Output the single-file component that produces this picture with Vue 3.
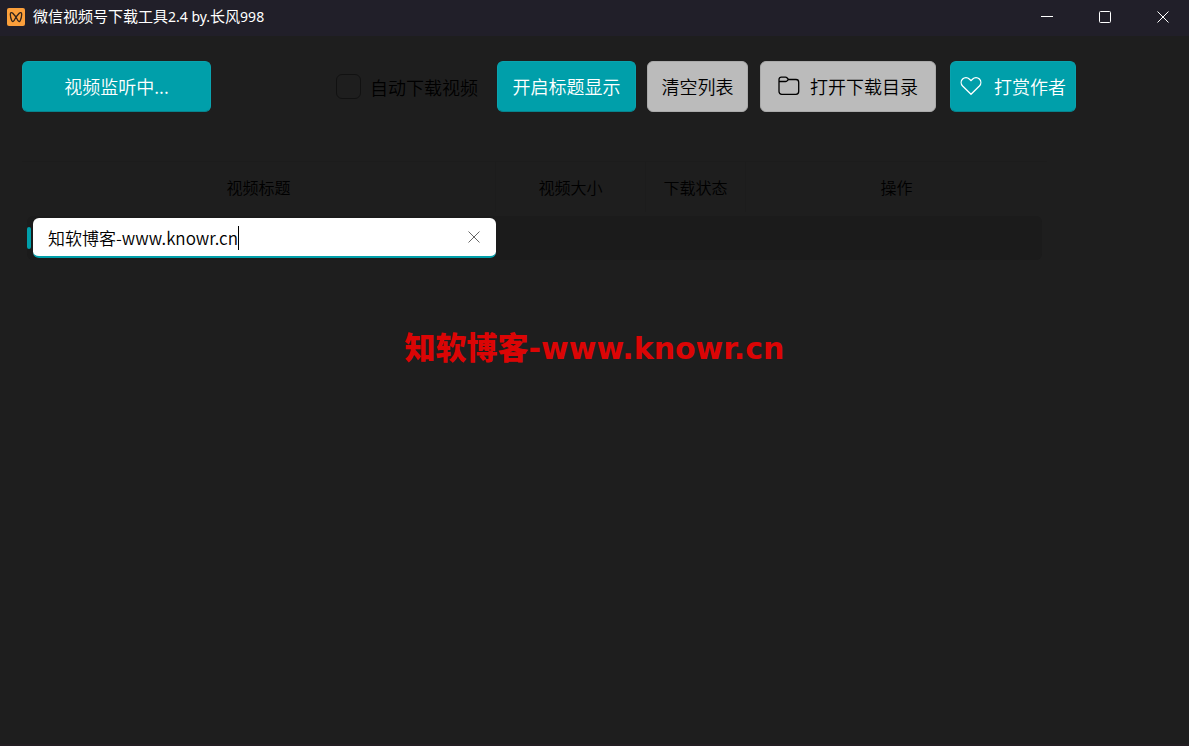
<script setup>
import { ref } from 'vue'

const autoDownload = ref(false)
const title = ref('知软博客-www.knowr.cn')
</script>

<template>
  <div class="window">
    <header class="titlebar">
      <svg class="logo" viewBox="0 0 18 18" aria-hidden="true">
        <rect width="18" height="18" rx="2" fill="#fb9f3b" />
        <path d="M9 9L5.800 5.300C4.600 4 3.300 4.400 3.300 6.300C3.300 8.500 4 11 4.800 12.700C5.300 13.800 6.300 13.700 7 12.700L9 9L11 12.700C11.700 13.700 12.700 13.800 13.200 12.700C14 11 14.700 8.500 14.700 6.300C14.700 4.400 13.400 4 12.200 5.300Z" fill="none" stroke="#33251c" stroke-width="1.300" stroke-linejoin="round" />
      </svg>
      <h1>微信视频号下载工具<span>2.4 by.</span>长风<span>998</span></h1>
      <div class="controls">
        <button type="button" aria-label="最小化">
          <svg viewBox="0 0 12 12"><path d="M0 5.500H12" /></svg>
        </button>
        <button type="button" aria-label="最大化">
          <svg viewBox="0 0 12 12"><rect x=".5" y=".5" width="11" height="11" rx="1" /></svg>
        </button>
        <button type="button" aria-label="关闭">
          <svg viewBox="0 0 12 12"><path d="M0.500 0.500L11.500 11.500M11.500 0.500L0.500 11.500" /></svg>
        </button>
      </div>
    </header>

    <main>
      <div class="toolbar">
        <button type="button" class="btn teal listen">视频监听中...</button>
        <label class="auto">
          <input v-model="autoDownload" type="checkbox" />
          <span>自动下载视频</span>
        </label>
        <button type="button" class="btn teal show">开启标题显示</button>
        <button type="button" class="btn grey clear">清空列表</button>
        <button type="button" class="btn grey folder">
          <svg width="22" height="20" viewBox="0 0 22 20" aria-hidden="true">
            <path d="M1 5.500V3.500C1 2 2 1.200 3.300 1.200H7.500C8.300 1.200 8.700 1.500 9.200 2L10.500 3.500H18C19.600 3.500 20.700 4.600 20.700 6.200V15.500C20.700 17.100 19.600 18.300 18 18.300H3.700C2.100 18.300 1 17.100 1 15.500V5.500H7.500C8.300 5.500 8.700 5.200 9.200 4.800L10.500 3.500" />
          </svg>
          打开下载目录
        </button>
        <button type="button" class="btn teal tip">
          <svg width="22" height="20" viewBox="0 0 22 20" aria-hidden="true">
            <path d="M11 18.300L2.600 10C0.700 8 0.700 4.900 2.600 3C4.500 1.100 7.500 1.100 9.300 3L11 4.700L12.700 3C14.500 1.100 17.500 1.100 19.400 3C21.300 4.900 21.300 8 19.400 10Z" />
          </svg>
          打赏作者
        </button>
      </div>

      <table>
        <colgroup>
          <col />
          <col class="size" />
          <col class="state" />
          <col class="action" />
        </colgroup>
        <thead>
          <tr>
            <th>视频标题</th>
            <th>视频大小</th>
            <th>下载状态</th>
            <th>操作</th>
          </tr>
        </thead>
        <tbody>
          <tr>
            <td>
              <div class="cell first">
                <i class="marker"></i>
                <div class="editor">
                  <input v-model="title" type="text" aria-label="视频标题" />
                  <div class="caret-track" aria-hidden="true"><span>{{ title }}</span><i></i></div>
                  <button type="button" aria-label="清除" @click="title = ''">
                    <svg width="12" height="12" viewBox="0 0 12 12"><path d="M0.500 0.500L11.500 11.500M11.500 0.500L0.500 11.500" /></svg>
                  </button>
                </div>
              </div>
            </td>
            <td><div class="cell"></div></td>
            <td><div class="cell"></div></td>
            <td><div class="cell last"></div></td>
          </tr>
        </tbody>
      </table>

      <p class="watermark">知软博客<span>-www.knowr.cn</span></p>
    </main>
  </div>
</template>

<style>
body {
  background: #1e1e1e;
}
</style>

<style scoped>
* {
  box-sizing: border-box;
}

.window {
  display: flex;
  flex-direction: column;
  min-height: 100vh;
  background: #1e1e1e;
  border-bottom: 2px solid #231e22;
  font-family: "Noto Sans CJK SC", sans-serif;
  font-weight: 350;
  color: #000;
}

button,
input {
  font: inherit;
  margin: 0;
}

.titlebar {
  display: flex;
  align-items: center;
  height: 36px;
  padding: 0 0 2px 7px;
  background: #211f29;
  color: #fff;
}

.logo {
  width: 18px;
  height: 18px;
  margin-right: 8px;
}

h1 {
  margin: 0;
  padding-bottom: 2px;
  font-size: 15px;
  line-height: 20px;
  font-weight: 400;
  white-space: nowrap;
}

h1 span {
  font-family: "Noto Sans", sans-serif;
  font-size: 14px;
}

.controls {
  display: flex;
  margin-left: auto;
  margin-right: -3px;
}

.controls button {
  display: flex;
  align-items: center;
  justify-content: center;
  width: 58px;
  height: 34px;
  padding: 0;
  border: 0;
  background: none;
}

.controls svg {
  width: 12px;
  height: 12px;
  fill: none;
  stroke: #fff;
}

main {
  padding: 25px 22px 0;
}

.toolbar {
  display: flex;
  align-items: center;
}

.btn {
  display: flex;
  align-items: center;
  justify-content: center;
  height: 51px;
  padding: 0 0 2px;
  border-radius: 6px;
  font-size: 18px;
  line-height: 24px;
  white-space: nowrap;
}

.btn svg {
  fill: none;
  stroke: currentColor;
  stroke-width: 1.3;
}

.teal {
  border: 1px solid #0aa3af;
  border-bottom-color: #07838d;
  background: #009faa;
  color: #fff;
}

.grey {
  border: 1px solid #aaa;
  background: #bbb;
}

.listen {
  width: 189px;
}

.auto {
  display: flex;
  align-items: center;
  gap: 9px;
  width: 161px;
  margin-left: 125px;
  font-size: 18px;
  line-height: 24px;
  white-space: nowrap;
}

.auto input {
  appearance: none;
  width: 25px;
  height: 25px;
  border: 1px solid #111;
  border-radius: 6px;
}

.show {
  width: 139px;
}

.clear {
  width: 101px;
  margin-left: 11px;
}

.folder {
  width: 176px;
  margin-left: 12px;
  gap: 10px;
}

.tip {
  width: 126px;
  margin-left: 14px;
  gap: 12px;
}

table {
  width: calc(100% - 120px);
  margin-top: 49px;
  border-collapse: separate;
  border-spacing: 0;
  table-layout: fixed;
}

.size {
  width: 150px;
}

.state {
  width: 100px;
}

.action {
  width: 301px;
}

th {
  height: 51px;
  padding: 0;
  border-top: 1px solid #1c1c1c;
  border-right: 1px solid #1c1c1c;
  font-size: 16px;
  line-height: 24px;
  font-weight: 350;
  text-align: center;
}

th:last-child {
  border-right: 0;
}

td {
  padding: 4px 0 0;
}

.cell {
  height: 44px;
  background: #1b1b1b;
}

.first {
  display: flex;
  align-items: center;
  margin-left: 5px;
  border-radius: 6px 0 0 6px;
}

.last {
  margin-right: 5px;
  border-radius: 0 6px 6px 0;
}

.marker {
  width: 4px;
  height: 22px;
  margin-right: 2px;
  border-radius: 2px;
  background: #009faa;
}

.editor {
  position: relative;
  display: flex;
  flex: 1;
  align-items: center;
  height: 40px;
  overflow: hidden;
  border-bottom: 2px solid #009faa;
  border-radius: 6px;
  background: #fff;
  font-size: 17px;
}

.editor input {
  flex: 1;
  min-width: 0;
  height: 38px;
  padding: 0 0 0 15px;
  border: 0;
  outline: 0;
  background: none;
  color: #000;
}

.caret-track {
  position: absolute;
  top: 0;
  left: 15px;
  display: flex;
  align-items: center;
  height: 40px;
  pointer-events: none;
}

.caret-track span {
  visibility: hidden;
}

.caret-track i {
  width: 1px;
  height: 24px;
  background: #000;
}

.editor button {
  display: flex;
  align-items: center;
  justify-content: center;
  width: 44px;
  height: 38px;
  padding: 0;
  border: 0;
  background: none;
}

.editor button svg {
  fill: none;
  stroke: #666;
}

.watermark {
  margin: 64px 0 0;
  text-align: center;
  font-size: 31px;
  line-height: 44px;
  font-weight: 900;
  color: #db0505;
}

.watermark span {
  font-family: "DejaVu Sans", sans-serif;
  font-size: 30px;
  font-weight: 700;
}
</style>
